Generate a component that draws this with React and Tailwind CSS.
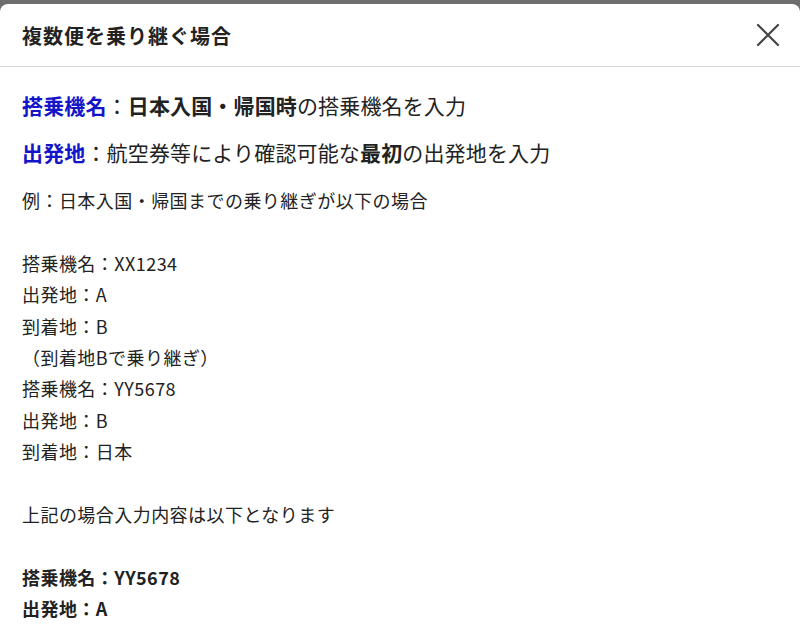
import React from 'react';

const ff = { fontFamily: '"Noto Sans CJK JP", "Noto Sans", sans-serif' };

const exampleLines = [
  '搭乗機名：XX1234',
  '出発地：A',
  '到着地：B',
  '（到着地Bで乗り継ぎ）',
  '搭乗機名：YY5678',
  '出発地：B',
  '到着地：日本',
];

const App = () => {
  return (
    <div className="h-[631px] w-[800px] overflow-hidden bg-[#6e6e6e] pt-[4px]" style={ff}>
      <div className="h-full rounded-t-[8px] bg-white text-[#222]">
        {/* Modal header */}
        <div className="flex h-[63px] items-center justify-between border-b border-[#d6d6d6] pl-[22px] pr-[18px]">
          <h2 className="pt-[1px] text-[20px] font-bold tracking-[1px]">複数便を乗り継ぐ場合</h2>
          <button className="flex h-[28px] w-[28px] items-center justify-center text-[#444]">
            <svg width="24" height="24" viewBox="0 0 24 24" fill="none" stroke="currentColor" strokeWidth="2.2" strokeLinecap="round">
              <path d="M2 2 L22 22 M22 2 L2 22" />
            </svg>
          </button>
        </div>

        {/* Modal body */}
        <div className="px-[22px] pt-[22px]">
          <p className="text-[21px] leading-[32px] tracking-[0.15px]">
            <span className="font-bold text-[#1414c8]">搭乗機名</span>：<span className="font-bold">日本入国・帰国時</span>の搭乗機名を入力
          </p>
          <p className="mt-[15px] text-[21px] leading-[32px] tracking-[0.15px]">
            <span className="font-bold text-[#1414c8]">出発地</span>：航空券等により確認可能な<span className="font-bold">最初</span>の出発地を入力
          </p>

          <div className="mt-[17px] text-[18px] leading-[31.4px] tracking-[0.45px]">
            <p>例：日本入国・帰国までの乗り継ぎが以下の場合</p>
            <p>&nbsp;</p>
            {exampleLines.map((line) => (
              <p key={line}>{line}</p>
            ))}
            <p>&nbsp;</p>
            <p>上記の場合入力内容は以下となります</p>
            <p>&nbsp;</p>
            <p className="font-bold">搭乗機名：YY5678</p>
            <p className="font-bold">出発地：A</p>
          </div>
        </div>
      </div>
    </div>
  );
};

export default App;
